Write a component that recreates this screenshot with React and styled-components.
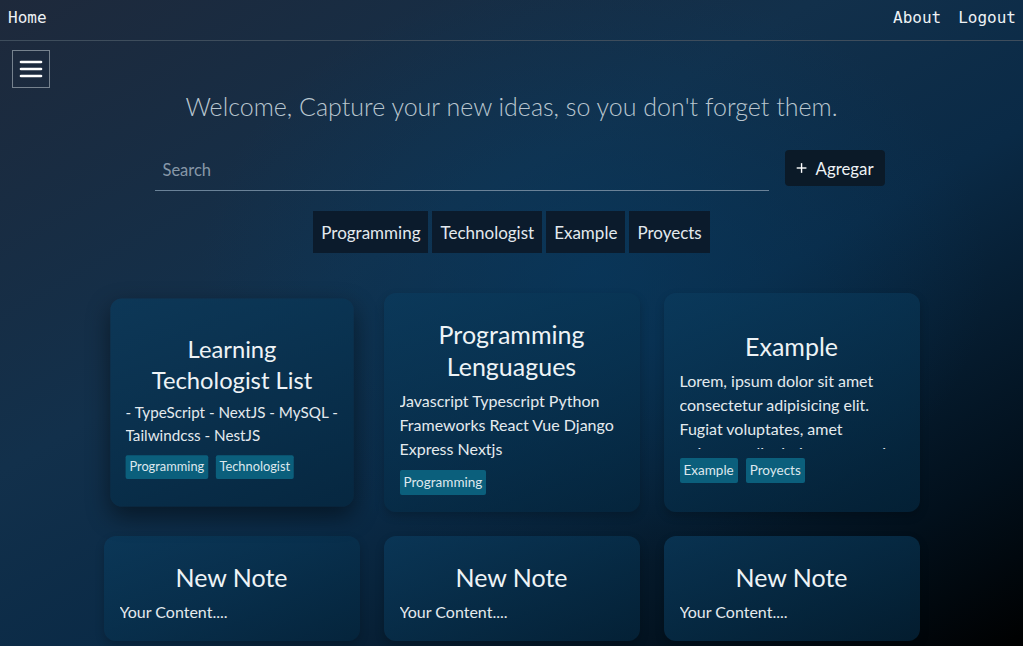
import React from "react";
import styled, { createGlobalStyle } from "styled-components";

const GlobalStyle = createGlobalStyle`
  html, body {
    margin: 0;
    padding: 0;
    overflow: hidden;
  }
  body {
    font-family: Lato, "Noto Sans", sans-serif;
    color: #e6ecf0;
  }
  * { box-sizing: border-box; }
`;

const Page = styled.div`
  min-height: 100vh;
  background:
    radial-gradient(ellipse 55% 65% at 58% 42%, rgba(6, 60, 100, 0.55), transparent 70%),
    linear-gradient(150deg, #1e293b 0%, #12304b 38%, #0a2a46 58%, #02101c 85%, #000 100%);
`;

const Nav = styled.nav`
  height: 41px;
  display: flex;
  align-items: flex-start;
  justify-content: space-between;
  padding: 8px 7px 0 8px;
  border-bottom: 1px solid #3e4d5c;
  font-family: "DejaVu Sans Mono", monospace;
  font-size: 16px;
  line-height: 19px;
`;

const NavGroup = styled.div`
  display: flex;
  gap: 17px;
`;

const NavLink = styled.a`
  color: #eef2f5;
  text-decoration: none;
`;

const MenuButton = styled.button`
  display: flex;
  align-items: center;
  justify-content: center;
  width: 38px;
  height: 38px;
  margin: 9px 0 0 12px;
  background: transparent;
  border: 1px solid #76828e;
  padding: 0;
`;

const Heading = styled.h1`
  margin: 4px 0 0;
  text-align: center;
  font-size: 25px;
  font-weight: 300;
  line-height: 28px;
  color: #b9c6cf;
`;

const SearchRow = styled.div`
  display: flex;
  justify-content: center;
  align-items: flex-start;
  gap: 16px;
  padding-left: 16px;
  margin-top: 30px;
`;

const SearchInput = styled.input`
  width: 614px;
  height: 41px;
  background: transparent;
  border: none;
  border-bottom: 1px solid #6a8298;
  padding: 0 8px;
  font-family: inherit;
  font-size: 16.5px;
  color: #e6ecf0;
  outline: none;
  &::placeholder { color: #8798a8; }
`;

const AddButton = styled.button`
  display: flex;
  align-items: center;
  gap: 9px;
  height: 36px;
  width: 100px;
  padding: 0 11px;
  background: #0b1a28;
  border: none;
  border-radius: 4px;
  font-family: inherit;
  font-size: 16.8px;
  color: #eef2f5;
`;

const FilterRow = styled.div`
  display: flex;
  justify-content: center;
  gap: 4px;
  margin-top: 20px;
`;

const FilterTag = styled.button`
  height: 42px;
  padding: 0 8px;
  background: #0b1b2c;
  border: none;
  font-family: inherit;
  font-size: 17px;
  color: #e3e9ee;
`;

const Grid = styled.div`
  display: grid;
  grid-template-columns: repeat(3, 256px);
  gap: 24px;
  justify-content: center;
  margin-top: 40px;
`;

const Card = styled.div`
  display: flex;
  flex-direction: column;
  justify-content: center;
  padding: 25px 16px 17px;
  border-radius: 12px;
  background: linear-gradient(160deg, rgba(10, 58, 92, 0.75), rgba(4, 38, 62, 0.7));
  box-shadow: ${(p) =>
    p.$active ? "0 10px 25px rgba(0, 0, 0, 0.45)" : "0 4px 10px rgba(0, 0, 0, 0.2)"};
  transform: ${(p) => (p.$active ? "scale(0.95)" : "none")};
`;

const CardTitle = styled.h2`
  margin: 0 0 7px;
  padding: 0 6px;
  text-align: center;
  font-size: 25px;
  font-weight: 400;
  line-height: 32px;
  color: #eef3f6;
`;

const CardText = styled.p`
  margin: 0;
  font-size: 16px;
  line-height: 24px;
  max-height: 80px;
  overflow: hidden;
  color: #e4eaee;
`;

const TagRow = styled.div`
  display: flex;
  gap: 8px;
  margin-top: 9px;
  &:empty { display: none; }
`;

const Tag = styled.span`
  padding: 4px 4px;
  border-radius: 2px;
  background: #0b5f7c;
  font-size: 13.5px;
  line-height: 17px;
  color: #dde8ee;
`;

const notes = [
  {
    title: "Learning Techologist List",
    text: "- TypeScript - NextJS - MySQL - Tailwindcss - NestJS",
    tags: ["Programming", "Technologist"],
    active: true,
  },
  {
    title: "Programming Lenguagues",
    text: "Javascript Typescript Python Frameworks React Vue Django Express Nextjs",
    tags: ["Programming"],
  },
  {
    title: "Example",
    text: "Lorem, ipsum dolor sit amet consectetur adipisicing elit. Fugiat voluptates, amet quisquam dignissimos corporis nemo.",
    tags: ["Example", "Proyects"],
  },
  { title: "New Note", text: "Your Content....", tags: [] },
  { title: "New Note", text: "Your Content....", tags: [] },
  { title: "New Note", text: "Your Content....", tags: [] },
];

const MenuIcon = () => (
  <svg width="24" height="20" viewBox="0 0 24 20">
    <g stroke="#ffffff" strokeWidth="2.6" strokeLinecap="round">
      <line x1="2" y1="3" x2="22" y2="3" />
      <line x1="2" y1="10" x2="22" y2="10" />
      <line x1="2" y1="17" x2="22" y2="17" />
    </g>
  </svg>
);

const PlusIcon = () => (
  <svg width="16" height="16" viewBox="0 0 16 16">
    <g stroke="#ffffff" strokeWidth="2">
      <line x1="1" y1="8" x2="15" y2="8" />
      <line x1="8" y1="1" x2="8" y2="15" />
    </g>
  </svg>
);

const App = () => {
  return (
    <Page>
      <GlobalStyle />
      <Nav>
        <NavLink href="#">Home</NavLink>
        <NavGroup>
          <NavLink href="#">About</NavLink>
          <NavLink href="#">Logout</NavLink>
        </NavGroup>
      </Nav>
      <MenuButton>
        <MenuIcon />
      </MenuButton>
      <Heading>Welcome, Capture your new ideas, so you don't forget them.</Heading>
      <SearchRow>
        <SearchInput placeholder="Search" />
        <AddButton>
          <PlusIcon />
          Agregar
        </AddButton>
      </SearchRow>
      <FilterRow>
        {["Programming", "Technologist", "Example", "Proyects"].map((f) => (
          <FilterTag key={f}>{f}</FilterTag>
        ))}
      </FilterRow>
      <Grid>
        {notes.map((note, index) => (
          <Card key={index} $active={note.active}>
            <CardTitle>{note.title}</CardTitle>
            <CardText>{note.text}</CardText>
            <TagRow>
              {note.tags.map((t) => (
                <Tag key={t}>{t}</Tag>
              ))}
            </TagRow>
          </Card>
        ))}
      </Grid>
    </Page>
  );
};

export default App;
